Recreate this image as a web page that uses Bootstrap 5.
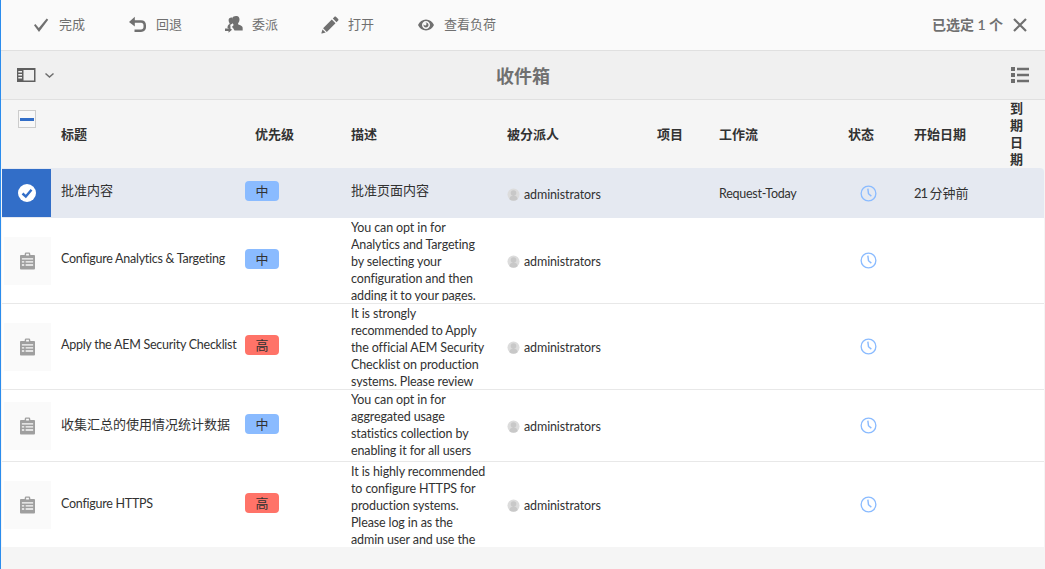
<!DOCTYPE html>
<html lang="zh">
<head>
    <meta charset="utf-8">
    <meta name="viewport" content="width=device-width, initial-scale=1.0">
    <title>收件箱</title>
    <link href="https://cdn.jsdelivr.net/npm/bootstrap@5.3.0/dist/css/bootstrap.min.css" rel="stylesheet">
    <style>
        html, body { height: 100%; }
        body {
            background: #f5f5f5;
            color: #323232;
            font-family: Lato, "Noto Sans CJK SC", sans-serif;
            font-size: 13px;
            line-height: 17px;
            overflow: hidden;
        }
        .app-shell { height: 100vh; border-left: 1px solid #2b8ced; }
        .action-bar { height: 51px; background: #fafafa; border-bottom: 1px solid #e0e0e0; padding-left: 31px; padding-right: 18px; }
        .action-btn { gap: 9px; margin-right: 43px; padding: 0; border: 0; font-size: 13px; line-height: 17px; color: #707070; }
        .action-btn:first-child { margin-right: 44px; }
        .action-btn svg { width: 18px; height: 18px; fill: #707070; flex: none; }
        .action-label { margin-bottom: 1px; }
        .selected-count { font-size: 14px; font-weight: 600; color: #707070; margin-right: 10px; margin-bottom: 1px; }
        .title-bar { height: 49px; background: #f0f0f0; border-bottom: 1px solid #e0e0e0; padding: 0 16px; }
        .title-text { font-size: 18px; font-weight: 700; color: #707070; margin: 2px 0 0; line-height: 24px; }
        .title-side { width: 60px; }
        .inbox-table { width: 1042px; margin: 0 0 0 1px; table-layout: fixed; border-collapse: separate; border-spacing: 0; }
        .inbox-table th { height: 68px; padding: 0 10px; background: #f5f5f5; font-weight: 700; font-size: 13px; color: #323232; vertical-align: middle; border: 0; }
        .inbox-table th.select-col { padding: 10px 0 0 16px; vertical-align: top; }
        .inbox-table td { padding: 0 10px; background: #fff; vertical-align: middle; border: 0; border-bottom: 1px solid #e8e8e8; color: #323232; }
        .inbox-table tr:last-child td { border-bottom: 0; }
        .inbox-table tr.is-selected td { background: #e5e9f1; border-bottom: 0; height: 50px; }
        .inbox-table tr.is-selected td:last-child { border-top-right-radius: 4px; }
        .inbox-table td.thumb-cell, .inbox-table td.priority-cell { padding: 0; }
        .inbox-table td.shift-up { padding-bottom: 5px; }
        .inbox-table td.shift-up.nudge-down { padding-top: 2px; }
        .inbox-table td.assignee-cell { padding-top: 2px; }
        .inbox-table tr:last-child td.thumb-cell { padding-top: 1px; }
        .latin-text { font-size: 12.5px; letter-spacing: -0.12px; }
        .inbox-table td.latin-tight { font-size: 12.5px; letter-spacing: -0.26px; }
        .age-text { word-spacing: -1px; }
        .age-text span { letter-spacing: -1px; }
        .select-box { width: 18px; height: 18px; border: 1px solid #ccc; background: #f8f8f8; }
        .select-box span { display: block; width: 14px; height: 3px; background: #326ec8; }
        .thumb-tile { width: 47px; height: 48px; margin-left: 2px; background: #fafafa; }
        .thumb-tile.is-checked { width: 49px; margin-left: 0; background: #326ec8; }
        .prio-tag { width: 34px; height: 20px; border-radius: 4px; font-size: 13px; line-height: 20px; text-align: center; color: #323232; margin-bottom: 4px; }
        .prio-mid { background: #8abbff; }
        .prio-high { background: #ff7368; }
        .desc-clip { max-height: 82px; overflow: hidden; margin: 1px 0 2px; }
        .avatar-dot { width: 13px; height: 13px; flex: none; }
        .status-wrap { padding-left: 12px; }
    </style>
</head>
<body>
<svg width="0" height="0" class="d-block">
    <defs>
        <symbol id="ic-clip" viewBox="0 0 16 18">
            <path fill="#9f9f9f" fill-rule="evenodd" d="M5 2.500V1.600C5 .7 5.700 0 6.500 0h3c.8 0 1.500.7 1.500 1.600v.9h4c.6 0 1 .4 1 1V17c0 .6-.4 1-1 1H1c-.6 0-1-.4-1-1V3.500c0-.6.4-1 1-1zM6.500 1.300v1.700h3V1.300zM2 6v1.500h12V6zM2 9.300v1.400h2.500V9.300zm4 0v1.400h8V9.300zM2 12.500V14h2.500v-1.500zm4 0V14h8v-1.500z"/>
        </symbol>
        <symbol id="ic-clock" viewBox="0 0 18 18">
            <circle cx="9" cy="9" r="7.800" fill="none" stroke="#8abbff" stroke-width="1.400"/>
            <path d="M8.300 3.800 9 9.200l3 2.600" fill="none" stroke="#8abbff" stroke-width="1.500"/>
        </symbol>
        <symbol id="ic-user" viewBox="0 0 14 14">
            <circle cx="7" cy="7" r="6.500" fill="#dcdcdc"/>
            <circle cx="7" cy="5.500" r="3" fill="#c8c8c8"/>
            <path d="M2.500 12c.4-2.800 2.200-3.800 4.500-3.800s4.100 1 4.500 3.800A6.500 6.500 0 0 1 2.500 12z" fill="#c8c8c8"/>
        </symbol>
    </defs>
</svg>
<div class="app-shell d-flex flex-column">
    <div class="action-bar d-flex align-items-center">
        <button class="btn action-btn d-flex align-items-center">
            <svg viewBox="0 0 18 18"><path d="M2 9.300 3.400 8l3.400 4L14.700 2.500 16.200 3.700 7 16z"/></svg><span class="action-label">完成</span>
        </button>
        <button class="btn action-btn d-flex align-items-center">
            <svg viewBox="0 0 18 18"><path d="M0 6 5.800.8v3.500H12c3.200 0 5 2 5 4.900v1.900c0 2.800-1.800 4.900-5 4.900H5.500v-2.500H12c1.600 0 2.500-1 2.500-2.400V9.200c0-1.400-.9-2.400-2.500-2.400H5.800v3.600z"/></svg><span class="action-label">回退</span>
        </button>
        <button class="btn action-btn d-flex align-items-center">
            <svg viewBox="0 0 18 18"><path d="M11.500 0c2 0 3.100 1.500 3 3.600 0 1.300-.5 2.700-1.300 3.600-.3.300-.2 1 .2 1.200 1.600.7 3.600 1.300 4.100 2.600.2.600.2 2.500.2 3.500H9.500l-1.300-2.300c-.3-.5-.9-1-1.400-1.300.8-.6 1.400-1.200 1.700-1.700.1-.3 0-.6-.2-.9-.8-1-1.300-2.300-1.300-3.700C7 1.500 8.200 0 10 .2c.5-.2 1-.2 1.500-.2zM6.500 1.500c.4 0 .6 0 .8.200-.5 1.900-.2 4 .5 5.200-.5.600-1.300 1.200-2.100 1.700-.5.300-.6.800-.3 1.100l.1 2.300H2.500c0-2.400.6-3.100 1.800-3.700.4-.3.500-.7.200-1.100-.6-.9-.9-1.900-.9-2.900 0-1.800 1.100-2.800 2.900-2.800zM3.500 12.500V10.800L7 13.800l-3.500 3v-1.800H0v-2.500z"/></svg><span class="action-label">委派</span>
        </button>
        <button class="btn action-btn d-flex align-items-center">
            <svg viewBox="0 0 18 18"><path d="M13.500.8c.5-.4 1-.4 1.400 0l2.300 2.300c.4.400.4 1 0 1.400L15.500 6.200 11.800 2.500zM10.800 3.500l3.700 3.700L5.800 16 2.100 12.300zM1.500 13.400l3.200 3.200-3.700 1c-.4.100-.7-.2-.6-.6z"/></svg><span class="action-label">打开</span>
        </button>
        <button class="btn action-btn d-flex align-items-center">
            <svg viewBox="0 0 18 18"><path fill-rule="evenodd" d="M9 3.500c3.600 0 6.500 2.200 8 5.500-1.500 3.300-4.400 5.500-8 5.500S2.500 12.300 1 9c1.500-3.300 4.400-5.500 8-5.500zM9 5C6.800 5 5 6.800 5 9s1.800 4 4 4 4-1.800 4-4-1.800-4-4-4zm0 1.500c1.400 0 2.500 1.100 2.500 2.500S10.400 11.500 9 11.500 6.500 10.400 6.500 9c0-.3 0-.5.100-.7.200.7.800 1.200 1.400 1.200.8 0 1.500-.7 1.500-1.500 0-.7-.5-1.300-1.200-1.400.2-.1.400-.1.700-.1z"/></svg><span class="action-label">查看负荷</span>
        </button>
        <div class="ms-auto d-flex align-items-center">
            <span class="selected-count">已选定 1 个</span>
            <svg width="14" height="14" viewBox="0 0 14 14"><path d="M1 1l12 12M13 1 1 13" stroke="#707070" stroke-width="2.200" fill="none"/></svg>
        </div>
    </div>
    <div class="title-bar d-flex align-items-center justify-content-between">
        <div class="title-side d-flex align-items-center gap-2">
            <svg width="19" height="14" viewBox="0 0 19 14"><path fill="#5f5f5f" fill-rule="evenodd" d="M0 0h18.500v14H0zM6.500 2v10.500H17V2zM1.300 3v1.400H5V3zm0 3v1.400H5V6zm0 3v1.400H5V9z"/></svg>
            <svg width="11" height="7" viewBox="0 0 11 7"><path d="M1.500 1.500 5.500 5l4-3.500" fill="none" stroke="#6e6e6e" stroke-width="1.500"/></svg>
        </div>
        <h1 class="title-text">收件箱</h1>
        <div class="title-side d-flex justify-content-end">
            <svg width="18" height="16" viewBox="0 0 18 16"><path fill="#6e6e6e" d="M0 0h4v4H0zM6 .8h12v2.400H6zM0 6h4v4H0zM6 6.800h12v2.400H6zM0 12h4v4H0zM6 12.800h12v2.400H6z"/></svg>
        </div>
    </div>
    <table class="table inbox-table">
        <colgroup>
            <col style="width:49px"><col style="width:194px"><col style="width:96px"><col style="width:156px"><col style="width:150px"><col style="width:62px"><col style="width:129px"><col style="width:66px"><col style="width:96px"><col style="width:44px">
        </colgroup>
        <thead>
            <tr>
                <th class="select-col"><div class="select-box d-flex align-items-center justify-content-center"><span></span></div></th>
                <th>标题</th>
                <th>优先级</th>
                <th>描述</th>
                <th>被分派人</th>
                <th>项目</th>
                <th>工作流</th>
                <th>状态</th>
                <th>开始日期</th>
                <th>到期日期</th>
            </tr>
        </thead>
        <tbody>
            <tr class="is-selected">
                <td class="thumb-cell"><div class="thumb-tile is-checked d-flex align-items-center justify-content-center">
                    <svg width="18" height="18" viewBox="0 0 18 18"><circle cx="9" cy="9" r="9" fill="#fff"/><path d="M4.500 9.500 7.800 12.500 13.500 5.800" fill="none" stroke="#326ec8" stroke-width="2.400"/></svg>
                </div></td>
                <td class="shift-up">批准内容</td>
                <td class="priority-cell"><div class="prio-tag prio-mid">中</div></td>
                <td class="shift-up">批准页面内容</td>
                <td class="assignee-cell"><div class="d-flex align-items-center gap-1 latin-text"><svg class="avatar-dot"><use href="#ic-user"/></svg>administrators</div></td>
                <td></td>
                <td class="latin-tight">Request-Today</td>
                <td><div class="status-wrap"><svg class="d-block" width="17" height="17"><use href="#ic-clock"/></svg></div></td>
                <td class="age-text"><span>21</span> 分钟前</td>
                <td></td>
            </tr>
            <tr>
                <td class="thumb-cell"><div class="thumb-tile d-flex align-items-center justify-content-center"><svg width="15" height="18"><use href="#ic-clip"/></svg></div></td>
                <td class="shift-up latin-tight text-nowrap">Configure Analytics &amp; Targeting</td>
                <td class="priority-cell"><div class="prio-tag prio-mid">中</div></td>
                <td class="latin-text"><div class="desc-clip">You can opt in for Analytics and Targeting by selecting your configuration and then adding it to your pages.</div></td>
                <td class="assignee-cell"><div class="d-flex align-items-center gap-1 latin-text"><svg class="avatar-dot"><use href="#ic-user"/></svg>administrators</div></td>
                <td></td>
                <td></td>
                <td><div class="status-wrap"><svg class="d-block" width="17" height="17"><use href="#ic-clock"/></svg></div></td>
                <td></td>
                <td></td>
            </tr>
            <tr>
                <td class="thumb-cell"><div class="thumb-tile d-flex align-items-center justify-content-center"><svg width="15" height="18"><use href="#ic-clip"/></svg></div></td>
                <td class="shift-up latin-tight text-nowrap">Apply the AEM Security Checklist</td>
                <td class="priority-cell"><div class="prio-tag prio-high">高</div></td>
                <td class="latin-text"><div class="desc-clip">It is strongly recommended to Apply the official AEM Security Checklist on production systems. Please review</div></td>
                <td class="assignee-cell"><div class="d-flex align-items-center gap-1 latin-text"><svg class="avatar-dot"><use href="#ic-user"/></svg>administrators</div></td>
                <td></td>
                <td></td>
                <td><div class="status-wrap"><svg class="d-block" width="17" height="17"><use href="#ic-clock"/></svg></div></td>
                <td></td>
                <td></td>
            </tr>
            <tr>
                <td class="thumb-cell"><div class="thumb-tile d-flex align-items-center justify-content-center"><svg width="15" height="18"><use href="#ic-clip"/></svg></div></td>
                <td class="shift-up nudge-down">收集汇总的使用情况统计数据</td>
                <td class="priority-cell"><div class="prio-tag prio-mid">中</div></td>
                <td class="latin-text"><div class="desc-clip">You can opt in for aggregated usage statistics collection by enabling it for all users</div></td>
                <td class="assignee-cell"><div class="d-flex align-items-center gap-1 latin-text"><svg class="avatar-dot"><use href="#ic-user"/></svg>administrators</div></td>
                <td></td>
                <td></td>
                <td><div class="status-wrap"><svg class="d-block" width="17" height="17"><use href="#ic-clock"/></svg></div></td>
                <td></td>
                <td></td>
            </tr>
            <tr>
                <td class="thumb-cell"><div class="thumb-tile d-flex align-items-center justify-content-center"><svg width="15" height="18"><use href="#ic-clip"/></svg></div></td>
                <td class="shift-up nudge-down latin-tight">Configure HTTPS</td>
                <td class="priority-cell"><div class="prio-tag prio-high">高</div></td>
                <td class="latin-text"><div class="desc-clip">It is highly recommended to configure HTTPS for production systems. Please log in as the admin user and use the</div></td>
                <td class="assignee-cell"><div class="d-flex align-items-center gap-1 latin-text"><svg class="avatar-dot"><use href="#ic-user"/></svg>administrators</div></td>
                <td></td>
                <td></td>
                <td><div class="status-wrap"><svg class="d-block" width="17" height="17"><use href="#ic-clock"/></svg></div></td>
                <td></td>
                <td></td>
            </tr>
        </tbody>
    </table>
</div>
</body>
</html>
